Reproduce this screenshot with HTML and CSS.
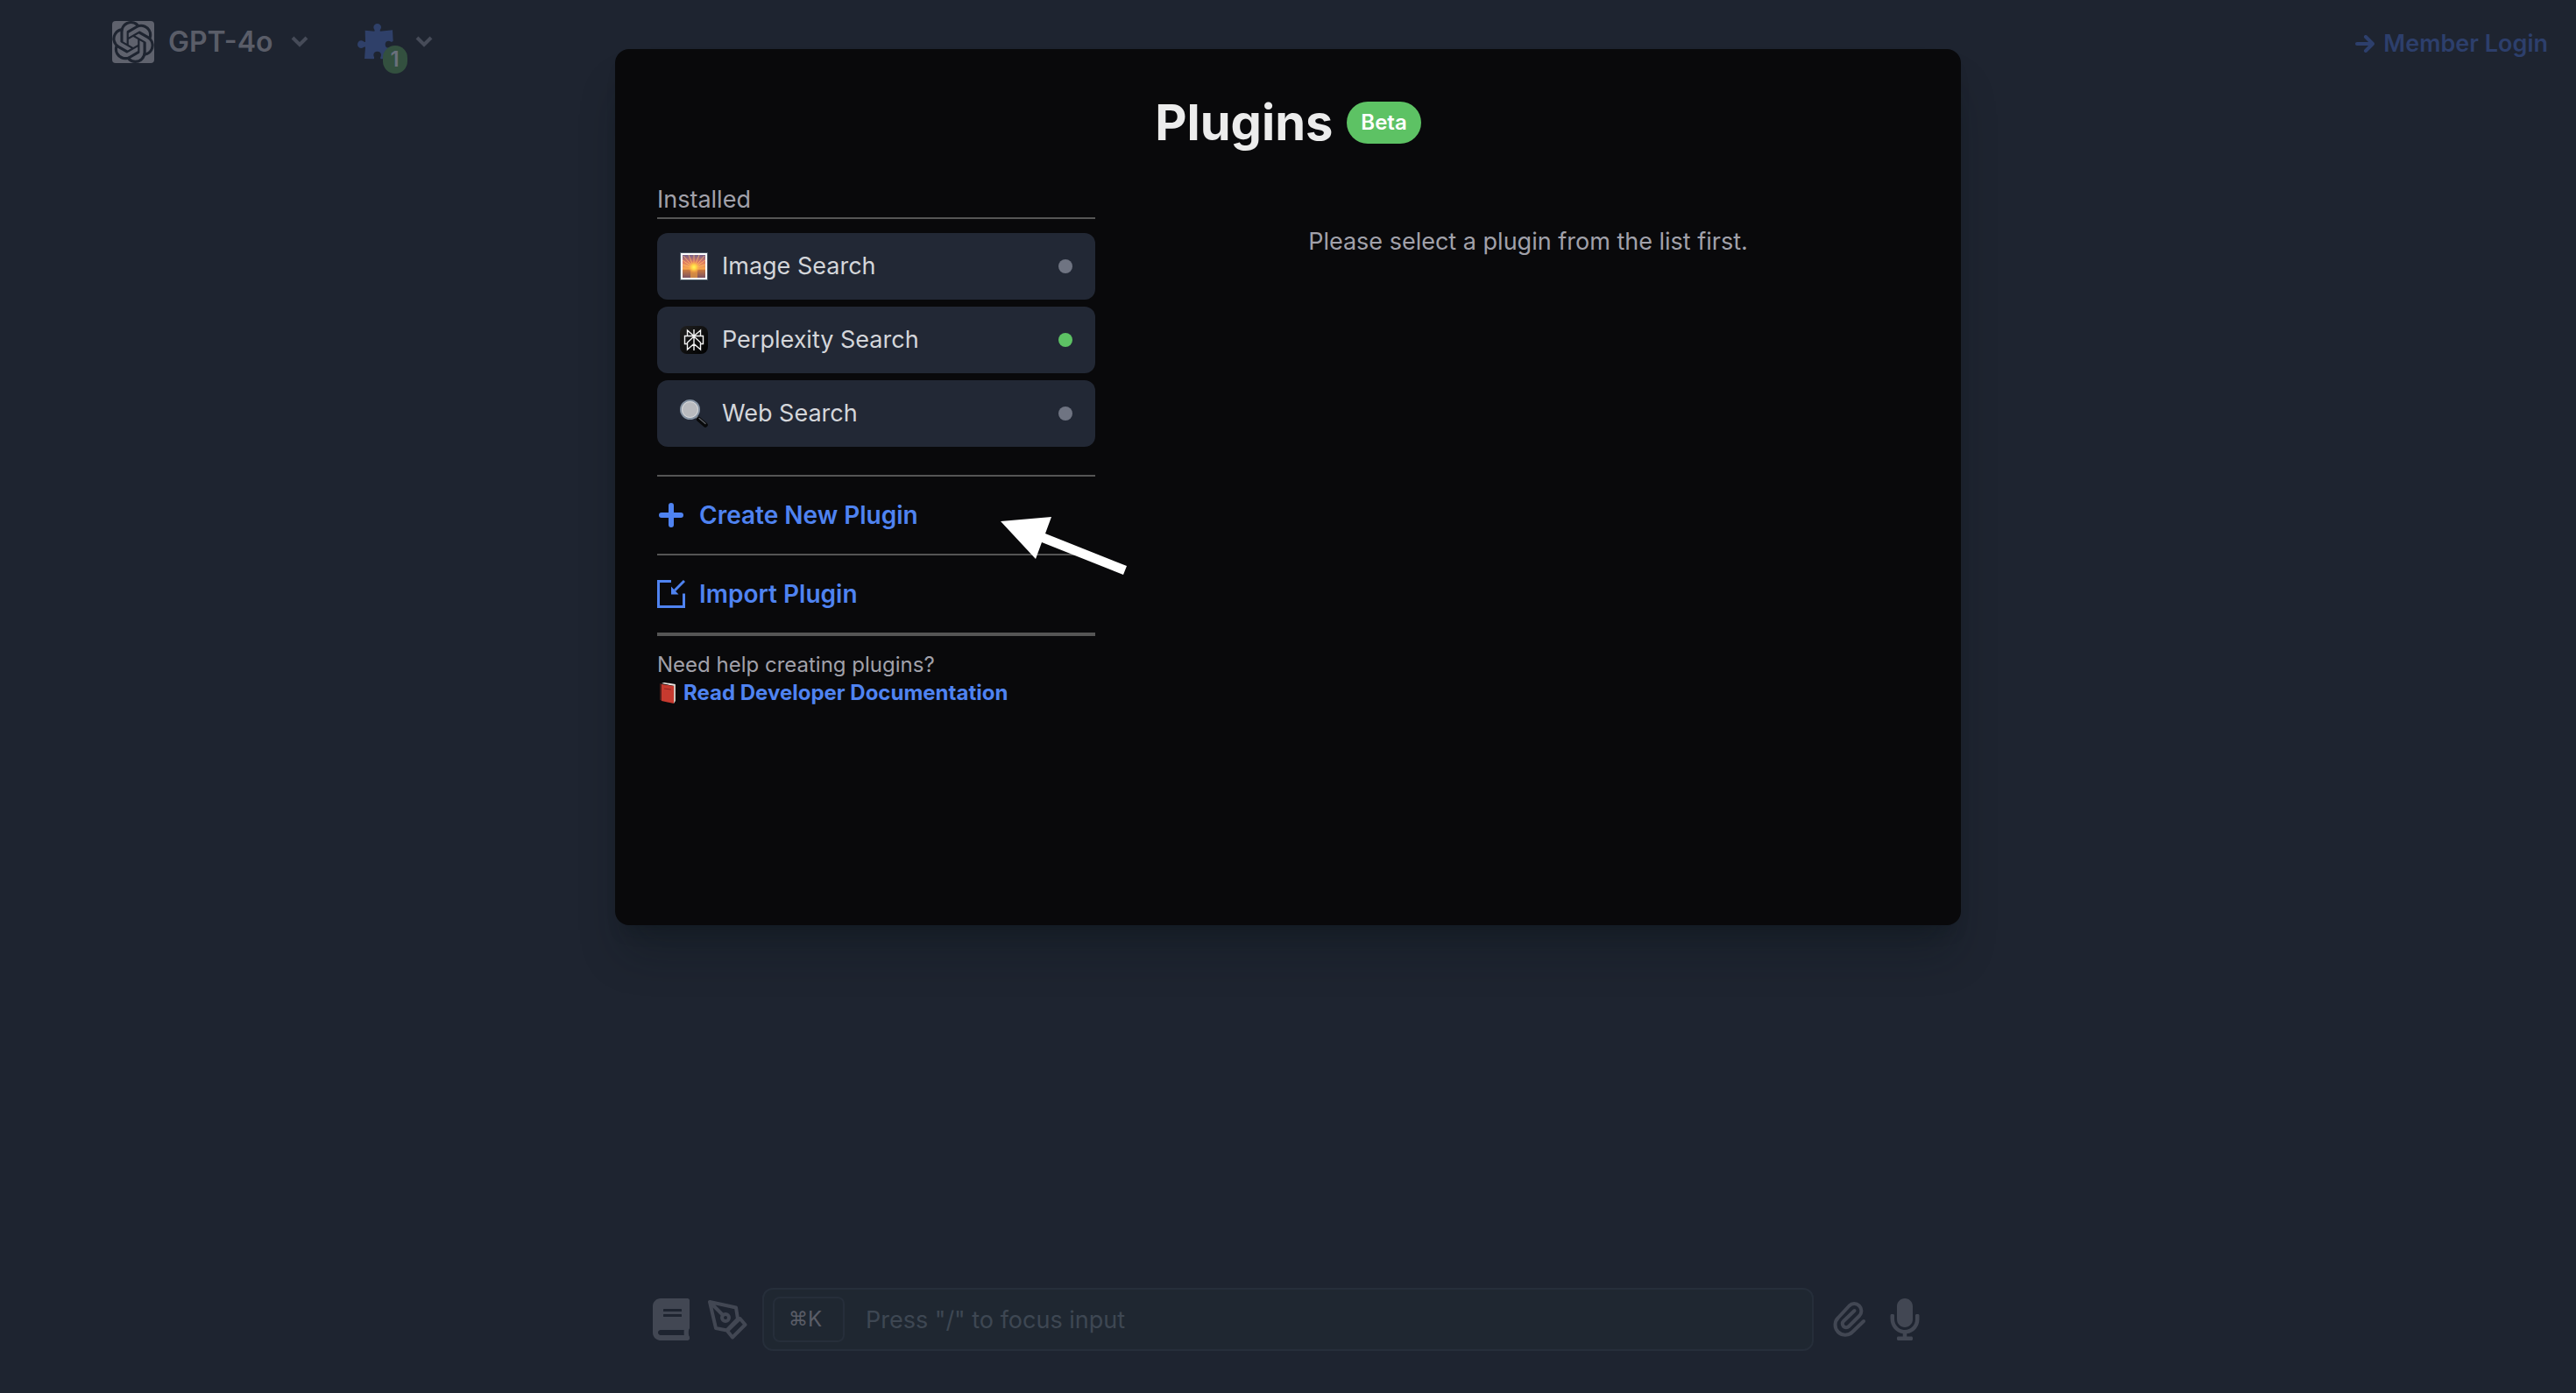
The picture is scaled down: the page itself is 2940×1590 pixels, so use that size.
FILE: index.html
```html
<!DOCTYPE html>
<html lang="en">
<head>
<meta charset="utf-8">
<meta name="viewport" content="width=device-width, initial-scale=1">
<title>Plugins</title>
<link rel="stylesheet" href="styles.css">
</head>
<body>
<header class="topbar">
  <button class="model" type="button">
    <svg class="model-logo" viewBox="0 0 24 24" aria-hidden="true"><rect class="logo-tile" width="24" height="24" rx="2"/><path class="logo-mark" d="M22.2819 9.8211a5.9847 5.9847 0 0 0-.5157-4.9108 6.0462 6.0462 0 0 0-6.5098-2.9A6.0651 6.0651 0 0 0 4.9807 4.1818a5.9847 5.9847 0 0 0-3.9977 2.9 6.0462 6.0462 0 0 0 .7427 7.0966 5.98 5.98 0 0 0 .511 4.9107 6.051 6.051 0 0 0 6.5146 2.9001A5.9847 5.9847 0 0 0 13.2599 24a6.0557 6.0557 0 0 0 5.7718-4.2058 5.9894 5.9894 0 0 0 3.9977-2.9001 6.0557 6.0557 0 0 0-.7475-7.0729zm-9.022 12.6081a4.4755 4.4755 0 0 1-2.8764-1.0408l.1419-.0804 4.7783-2.7582a.7948.7948 0 0 0 .3927-.6813v-6.7369l2.02 1.1686a.071.071 0 0 1 .038.052v5.5826a4.504 4.504 0 0 1-4.4945 4.4944zm-9.6607-4.1254a4.4708 4.4708 0 0 1-.5346-3.0137l.142.0852 4.783 2.7582a.7712.7712 0 0 0 .7806 0l5.8428-3.3685v2.3324a.0804.0804 0 0 1-.0332.0615L9.74 19.9502a4.4992 4.4992 0 0 1-6.1408-1.6464zM2.3408 7.8956a4.485 4.485 0 0 1 2.3655-1.9728V11.6a.7664.7664 0 0 0 .3879.6765l5.8144 3.3543-2.0201 1.1685a.0757.0757 0 0 1-.071 0l-4.8303-2.7865A4.504 4.504 0 0 1 2.3408 7.872zm16.5963 3.8558L13.1038 8.364 15.1192 7.2a.0757.0757 0 0 1 .071 0l4.8303 2.7913a4.4944 4.4944 0 0 1-.6765 8.1042v-5.6772a.79.79 0 0 0-.407-.667zm2.0107-3.0231l-.142-.0852-4.7735-2.7818a.7759.7759 0 0 0-.7854 0L9.409 9.2297V6.8974a.0662.0662 0 0 1 .0284-.0615l4.8303-2.7866a4.4992 4.4992 0 0 1 6.6802 4.66zM8.3065 12.863l-2.02-1.1638a.0804.0804 0 0 1-.038-.0567V6.0742a4.4992 4.4992 0 0 1 7.3757-3.4537l-.142.0805L8.704 5.459a.7948.7948 0 0 0-.3927.6813zm1.0976-2.3654l2.602-1.4998 2.6069 1.4998v2.9994l-2.5974 1.4997-2.6067-1.4997Z"/></svg>
    <span>GPT-4o</span>
    <svg class="chevron" viewBox="0 0 20 14" aria-hidden="true"><path d="M2 2l8 8 8-8"/></svg>
  </button>
  <button class="plugin-menu" type="button" aria-label="Enabled plugins">
    <span class="puzzle">
      <svg class="puzzle-icon" viewBox="0 0 126 126" aria-hidden="true"><path d="M26 23L58 26C61 21 55 19 55 12a13 12 0 0 1 26 0C81 19 75 21 78 26L120 22L122 60C116 65 113 60 107 59a12 12 0 0 0 0 24C113 83 116 78 121 83L119 120L80 121C76 116 81 113 81 107a13 12 0 0 0-26 0C55 113 60 116 56 121L24 120L27 80C22 77 19 84 13 84a13 13 0 0 1 0-26C19 58 22 65 27 62Z"/></svg>
      <span class="count">1</span>
    </span>
    <svg class="chevron" viewBox="0 0 20 14" aria-hidden="true"><path d="M2 2l8 8 8-8"/></svg>
  </button>
  <a class="login" href="#login">
    <svg class="login-arrow" viewBox="0 0 22 20" aria-hidden="true"><path d="M2 10h18M12 2l8 8-8 8"/></svg>
    <span>Member Login</span>
  </a>
</header>

<main class="stage">
  <section class="modal" role="dialog" aria-labelledby="modal-title">
    <div class="modal-head">
      <h1 class="modal-title" id="modal-title">Plugins</h1>
      <span class="beta">Beta</span>
    </div>
    <div class="modal-body">
      <div class="sidebar">
        <h2 class="group">Installed</h2>
        <ul class="plugins">
          <li><button class="plugin" type="button">
            <svg class="plugin-icon" viewBox="0 0 32 32" aria-hidden="true">
              <defs>
                <linearGradient id="sky" x1="0" y1="0" x2="0" y2="1"><stop offset="0" stop-color="#75608a"/><stop offset=".3" stop-color="#dd7762"/><stop offset=".62" stop-color="#f8a94c"/><stop offset=".66" stop-color="#c9783f"/><stop offset="1" stop-color="#7d5361"/></linearGradient>
                <radialGradient id="sun"><stop offset="0" stop-color="#fff65c"/><stop offset=".4" stop-color="#ffd447"/><stop offset="1" stop-color="#ff9a48" stop-opacity="0"/></radialGradient>
              </defs>
              <rect width="32" height="32" fill="#4c5a66"/><rect x="1" y="1" width="30" height="30" fill="#fff"/><rect x="3" y="3" width="26" height="26" fill="url(#sky)"/>
              <path d="M16 18L3 9M16 18L4 4M16 18L10 3M16 18V3M16 18L22 3M16 18L28 4M16 18L29 9M16 18L3 14M16 18L29 14" stroke="#ffc368" stroke-opacity=".7"/>
              <path d="M12 20h8v9h-8z" fill="#e89a3e" opacity=".7"/><circle cx="16" cy="17" r="7" fill="url(#sun)"/>
            </svg>
            <span>Image Search</span><span class="dot"></span></button></li>
          <li><button class="plugin" type="button">
            <svg class="plugin-icon" viewBox="0 0 32 32" aria-hidden="true">
              <defs><linearGradient id="tile" x1="0" y1="0" x2="1" y2="1"><stop offset="0" stop-color="#202020"/><stop offset="1" stop-color="#000"/></linearGradient></defs>
              <rect width="32" height="32" rx="8" fill="url(#tile)"/>
              <path d="M16 4v24M8.500 11.500V5l7.500 6.500L23.500 5v6.500M8.500 20.500h-3v-9h21v9h-3M16 12l-7.500 7v8l7.500-6.500 7.500 6.500v-8L16 12" fill="none" stroke="#f2f2f2" stroke-width="1.400"/>
            </svg>
            <span>Perplexity Search</span><span class="dot dot-on"></span></button></li>
          <li><button class="plugin" type="button">
            <svg class="plugin-icon" viewBox="0 0 32 32" aria-hidden="true">
              <path d="M19 20l3 3" stroke="#8a8f96" stroke-width="3"/><path d="M21.500 22.500l7.500 6.500" stroke="#08090a" stroke-width="5.500" stroke-linecap="round"/><path d="M22 21.500l7 6" stroke="#5d6066" stroke-width="1.400" stroke-linecap="round"/>
              <circle cx="11.500" cy="11.500" r="10.500" fill="#b9bbbf" stroke="#8593a3" stroke-width="2"/><circle cx="11.500" cy="11.500" r="9" fill="none" stroke="#d9dbde"/>
            </svg>
            <span>Web Search</span><span class="dot"></span></button></li>
        </ul>
        <div class="action-row">
          <button class="action" type="button">
            <svg class="action-icon" viewBox="0 0 32 32" aria-hidden="true"><path class="plus" d="M16 5v22M5 16h22"/></svg>
            <span>Create New Plugin</span>
          </button>
          <svg class="pointer" viewBox="0 0 148 70" aria-hidden="true"><path d="M2 7L60 2L53 21L146 58L142 68L49 31L42 50Z"/></svg>
        </div>
        <div class="action-row">
          <button class="action" type="button">
            <svg class="action-icon" viewBox="0 0 32 32" aria-hidden="true"><path class="import" d="M16 1.500H1.500v29h29V15.500M31 1L20 12"/><path class="import-head" d="M16 7.500v9h8.500Z"/></svg>
            <span>Import Plugin</span>
          </button>
        </div>
        <div class="help">
          <p class="help-text">Need help creating plugins?</p>
          <a class="docs" href="#docs">
            <svg class="docs-icon" viewBox="0 0 24 24" aria-hidden="true"><path d="M3 1l3 1v19l-3-1z" fill="#4e1c19"/><path d="M5 1l3-1 13 2-1 2z" fill="#e9e4df"/><path d="M5 2l14 2v20L5 21z" fill="#c73a2f"/><path d="M19 4l2-2v19l-2 3z" fill="#cfc2bb"/><path d="M8 7l8 1" stroke="#93251f"/></svg>
            <span>Read Developer Documentation</span>
          </a>
        </div>
      </div>
      <p class="empty">Please select a plugin from the list first.</p>
    </div>
  </section>
</main>

<footer class="composer">
  <button class="tool" type="button" aria-label="Prompt library"><svg class="tool-book" viewBox="0 0 448 512"><path d="M448 360V24c0-13.300-10.700-24-24-24H96C43 0 0 43 0 96v320c0 53 43 96 96 96h328c13.300 0 24-10.700 24-24v-16c0-7.500-3.500-14.300-8.900-18.700-4.200-15.400-4.200-59.300 0-74.700 5.400-4.300 8.900-11.100 8.900-18.600zM128 134c0-3.300 2.700-6 6-6h212c3.300 0 6 2.700 6 6v20c0 3.300-2.700 6-6 6H134c-3.300 0-6-2.700-6-6v-20zm0 64c0-3.300 2.700-6 6-6h212c3.300 0 6 2.700 6 6v20c0 3.300-2.700 6-6 6H134c-3.300 0-6-2.700-6-6v-20zm253.400 250H96c-17.700 0-32-14.300-32-32 0-17.600 14.400-32 32-32h285.400c-1.900 17.100-1.900 46.900 0 64z"/></svg></button>
  <button class="tool" type="button" aria-label="Writing style"><svg class="tool-line" viewBox="0 0 48 48"><path d="M4 4L11 34L23.500 36.500L36 23.500L34 10.500ZM4 4L19 19M24 37L38.500 23L44.500 30L30 44.500Z"/><circle cx="22" cy="22" r="4"/></svg></button>
  <div class="field">
    <kbd class="shortcut"><span class="cmd">⌘</span>K</kbd>
    <input class="prompt" type="text" aria-label="Message" placeholder="Press &quot;/&quot; to focus input">
  </div>
  <button class="tool" type="button" aria-label="Attach a file"><svg class="tool-line" viewBox="0 0 48 48"><path d="M41 26L28 38.500A11.200 11.200 0 0 1 12 22L24.500 8.500A8 8 0 0 1 36 20L24 32A4.200 4.200 0 0 1 18 26L30.500 14"/></svg></button>
  <button class="tool" type="button" aria-label="Voice input"><svg class="tool-mic" viewBox="0 0 352 512"><path d="M176 352c53.020 0 96-42.980 96-96V96c0-53.020-42.980-96-96-96S80 42.980 80 96v160c0 53.020 42.980 96 96 96zm160-160h-16c-8.840 0-16 7.160-16 16v48c0 74.800-64.490 134.820-140.790 127.380C96.710 376.890 48 317.110 48 250.300V208c0-8.840-7.160-16-16-16H16c-8.840 0-16 7.160-16 16v40.160c0 89.640 63.970 169.550 152 181.690V464H96c-8.840 0-16 7.160-16 16v16c0 8.840 7.160 16 16 16h160c8.840 0 16-7.160 16-16v-16c0-8.840-7.160-16-16-16h-56v-33.770C285.710 418.470 352 344.900 352 256v-48c0-8.840-7.160-16-16-16z"/></svg></button>
</footer>
</body>
</html>
```
FILE: styles.css
```css
*, *::before, *::after { box-sizing: border-box; }

body {
  margin: 0;
  min-height: 100vh;
  display: flex;
  flex-direction: column;
  position: relative;
  background: #1e2430;
  color: #a1a1aa;
  font-family: Inter, "Liberation Sans", sans-serif;
  font-size: 27px;
  line-height: 40px;
}

h1, h2, p, ul { margin: 0; padding: 0; font-weight: 400; font-size: inherit; }
ul { list-style: none; }
button { border: 0; padding: 0; margin: 0; background: none; color: inherit; font: inherit; cursor: pointer; }
a { text-decoration: none; }
svg { display: block; flex: none; fill: none; }

/* Top bar */
.topbar { display: flex; align-items: center; height: 96px; padding: 0 32px 0 128px; }
.model { display: flex; align-items: center; gap: 16px; color: #5a5d68; font-size: 32px; font-weight: 600; }
.model-logo { width: 48px; height: 48px; }
.logo-tile { fill: #5f626d; }
.logo-mark { fill: #1e2430; }
.chevron { width: 20px; height: 14px; margin-left: 4px; stroke: #464b58; stroke-width: 4; }
.plugin-menu { display: flex; align-items: center; gap: 20px; margin-left: 56px; }
.puzzle { position: relative; display: block; }
.puzzle-icon { width: 42px; height: 42px; fill: #2f4069; }
.count {
  position: absolute; left: 29px; top: 25px;
  width: 28px; height: 32px; border-radius: 14px;
  background: #33503f; color: #6a707c;
  font-size: 24px; line-height: 32px; font-weight: 600; text-align: center;
}
.login { display: flex; align-items: center; gap: 10px; margin-left: auto; padding-top: 4px; color: #2d3f6c; font-weight: 600; }
.login-arrow { width: 22px; height: 20px; stroke: #2d3f6c; stroke-width: 4; stroke-linecap: round; stroke-linejoin: round; }

/* Plugin dialog */
.stage { position: absolute; top: 56px; left: 48px; right: 48px; display: flex; justify-content: center; }
.modal {
  width: 100%; max-width: 1536px; min-height: 1000px;
  padding: 48px; border-radius: 16px; background: #09090b;
  box-shadow: 0 40px 50px -10px rgba(10, 20, 24, .3), 0 16px 20px -12px rgba(10, 20, 24, .3);
}
.modal-head { display: flex; align-items: center; justify-content: center; gap: 16px; height: 72px; }
.modal-title { color: #ececec; font-size: 56px; line-height: 72px; font-weight: 700; }
.beta { padding: 0 16px; border-radius: 24px; background: #5dc264; color: #fff; font-size: 24px; line-height: 48px; font-weight: 600; }
.modal-body { display: flex; gap: 48px; margin-top: 32px; }
.sidebar { width: 500px; flex: none; }
.group { border-bottom: 2px solid #555; line-height: 40px; }
.plugins { display: flex; flex-direction: column; gap: 8px; margin: 16px 0 32px; }
.plugin {
  display: flex; align-items: center; gap: 16px; width: 100%; height: 76px;
  padding: 0 26px; border-radius: 12px; background: #222835; color: #d4d6da; text-align: left;
}
.plugin-icon { width: 32px; height: 32px; }
.dot { width: 16px; height: 16px; margin-left: auto; border-radius: 50%; background: #6f7482; }
.dot-on { background: #5dc264; }
.action-row { position: relative; border-top: 2px solid #555; }
.action { display: flex; align-items: center; gap: 16px; width: 100%; height: 88px; color: #4f83f1; font-size: 28px; font-weight: 600; }
.action-icon { width: 32px; height: 32px; }
.plus { stroke: #4f83f1; stroke-width: 6; stroke-linecap: round; }
.import { stroke: #4f83f1; stroke-width: 3; }
.import-head { fill: #4f83f1; }
.pointer { position: absolute; left: 390px; top: 44px; z-index: 1; width: 148px; height: 70px; fill: #fff; }
.help { padding-top: 17px; border-top: 4px solid #555; font-size: 24px; line-height: 32px; }
.docs { display: flex; align-items: center; gap: 6px; color: #4f83f1; font-weight: 700; }
.docs-icon { width: 24px; height: 24px; }
.empty { flex: 1; padding-top: 48px; text-align: center; }

/* Message composer */
.composer { display: flex; align-items: center; width: 100%; max-width: 1472px; margin: auto auto 48px; }
.tool { display: flex; align-items: center; justify-content: center; width: 64px; height: 64px; fill: #424753; }
.tool svg { fill: inherit; }
.tool-book { width: 42px; height: 48px; }
.tool-mic { width: 34px; height: 48px; }
.tool .tool-line { width: 48px; height: 48px; fill: none; stroke: #424753; stroke-width: 4; stroke-linecap: round; stroke-linejoin: round; }
.field {
  display: flex; align-items: center; flex: 1; height: 72px; margin: 0 8px; padding: 0 10px;
  border: 2px solid #262e3a; border-radius: 12px; background: #1f2731;
}
.shortcut {
  display: flex; align-items: center; width: 82px; height: 52px; padding-left: 16px;
  border: 2px solid #262e3a; border-radius: 8px; color: #5a5d67;
  font-family: inherit; font-size: 24px;
}
.cmd { font-family: "DejaVu Sans", sans-serif; font-size: 22px; }
.prompt {
  flex: 1; min-width: 0; height: 64px; margin-left: 24px; padding: 0; border: 0; outline: 0;
  background: transparent; color: #5a5d67; font: inherit;
}
.prompt::placeholder { color: #3e4753; opacity: 1; }
```
